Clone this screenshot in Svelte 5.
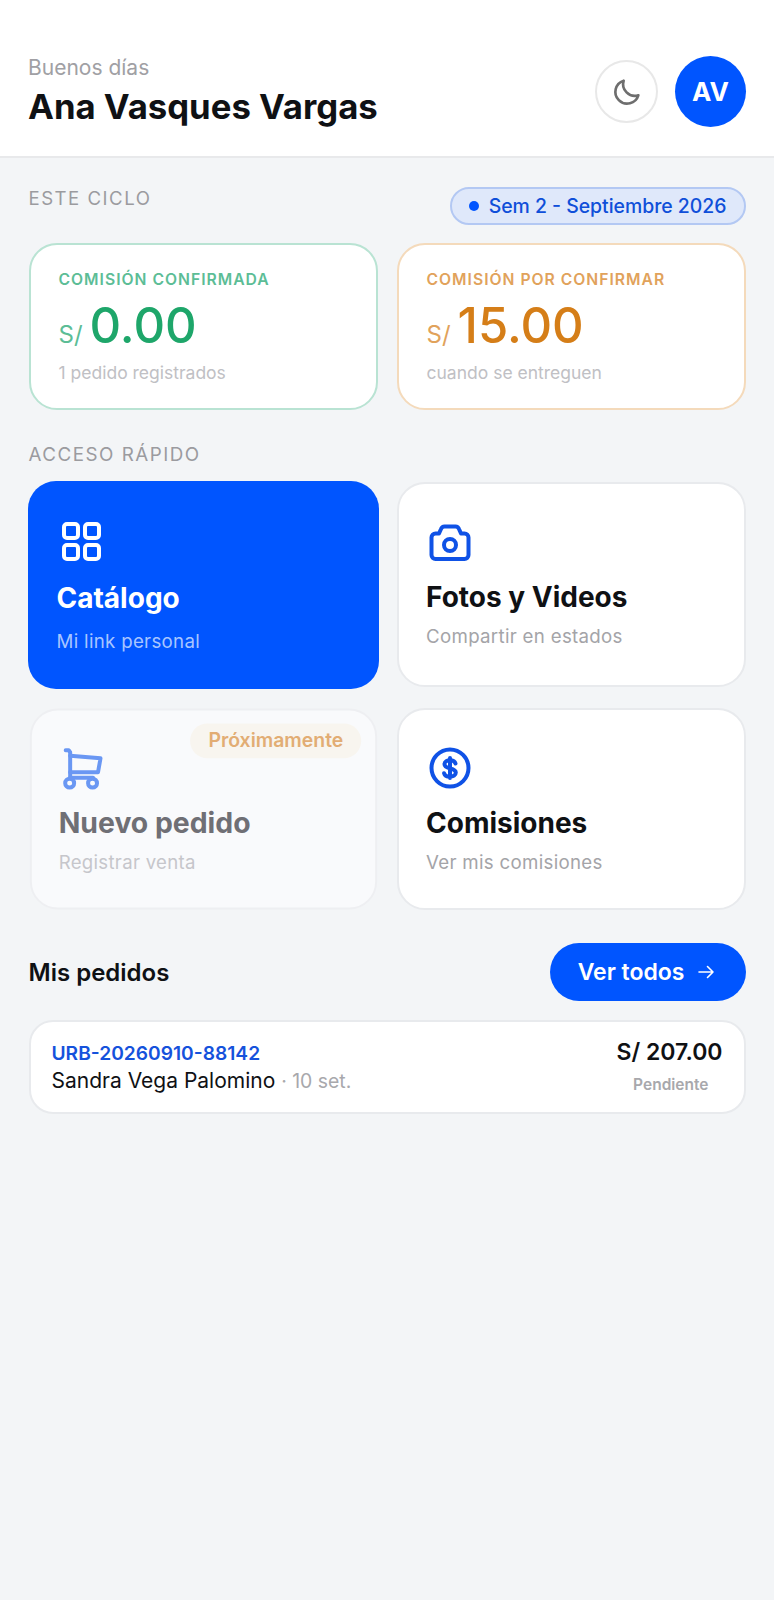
<script>
	const stats = [
		{ tone: "green", label: "Comisión confirmada", value: "0.00", note: "1 pedido registrados" },
		{ tone: "orange", label: "Comisión por confirmar", value: "15.00", note: "cuando se entreguen" },
	];
</script>

{#snippet grid_icon()}
	<svg class="icon" viewBox="0 0 48 48" fill="none" stroke="currentColor" stroke-width="4" stroke-linejoin="round">
		<rect x="7" y="7" width="14" height="14" rx="3" />
		<rect x="28" y="7" width="14" height="14" rx="3" />
		<rect x="7" y="28" width="14" height="14" rx="3" />
		<rect x="28" y="28" width="14" height="14" rx="3" />
	</svg>
{/snippet}

{#snippet camera_icon()}
	<svg class="icon" viewBox="0 0 48 48" fill="none" stroke="currentColor" stroke-width="4" stroke-linejoin="round">
		<path d="M5.500 19.500a4 4 0 0 1 4-4h3.500l2-4.500a4 4 0 0 1 3.500-2.500h11a4 4 0 0 1 3.500 2.500l2 4.500h3.500a4 4 0 0 1 4 4V37a4 4 0 0 1-4 4h-29a4 4 0 0 1-4-4Z" />
		<circle cx="24" cy="27" r="6" />
	</svg>
{/snippet}

{#snippet cart_icon()}
	<svg class="icon" viewBox="0 0 48 48" fill="none" stroke="currentColor" stroke-width="4" stroke-linecap="round" stroke-linejoin="round">
		<path d="M7 6h3l1.500 2V34" />
		<path d="M11.500 11.500 42 14l-2.500 14h-28" />
		<path d="M11.500 33.500h23" />
		<circle cx="11" cy="39" r="4.500" />
		<circle cx="34" cy="39" r="4.500" />
	</svg>
{/snippet}

{#snippet dollar_icon()}
	<svg class="icon" viewBox="0 0 48 48" fill="none" stroke="currentColor">
		<circle cx="24" cy="24" r="18.500" stroke-width="4" />
		<path d="M29.500 19.500c-.5-2-2.800-3.200-5.500-3.200s-5.500 1.300-5.500 3.900c0 5.600 11.300 2.900 11.300 8.400 0 2.600-2.600 4-5.800 4s-5.400-1.200-5.900-3.400M24 14v20" stroke-width="4" stroke-linecap="round" />
	</svg>
{/snippet}

<div class="page">
	<header class="top">
		<div class="who">
			<p class="hello">Buenos días</p>
			<h1>Ana Vasques Vargas</h1>
		</div>
		<button class="theme" aria-label="Cambiar tema">
			<svg viewBox="0 0 24 24" width="32" height="32" fill="none" stroke="currentColor" stroke-width="2" stroke-linecap="round" stroke-linejoin="round">
				<path d="M20.500 14.500A8.800 8.800 0 0 1 9.500 3.500a8.800 8.800 0 1 0 11 11Z" />
			</svg>
		</button>
		<div class="avatar">AV</div>
	</header>

	<main>
		<div class="cycle">
			<span class="section">Este ciclo</span>
			<span class="pill"><i></i>Sem 2 - Septiembre 2026</span>
		</div>

		<div class="stats">
			{#each stats as stat}
				<div class="stat {stat.tone}">
					<div class="stat-label">{stat.label}</div>
					<div class="amount"><small>S/</small><b>{stat.value}</b></div>
					<div class="stat-note">{stat.note}</div>
				</div>
			{/each}
		</div>

		<div class="section access">Acceso rápido</div>

		<div class="tiles">
			<a class="tile primary">
				{@render grid_icon()}
				<strong>Catálogo</strong>
				<span>Mi link personal</span>
			</a>
			<a class="tile">
				{@render camera_icon()}
				<strong>Fotos y Videos</strong>
				<span>Compartir en estados</span>
			</a>
			<a class="tile disabled">
				<em>Próximamente</em>
				{@render cart_icon()}
				<strong>Nuevo pedido</strong>
				<span>Registrar venta</span>
			</a>
			<a class="tile">
				{@render dollar_icon()}
				<strong>Comisiones</strong>
				<span>Ver mis comisiones</span>
			</a>
		</div>

		<div class="orders-head">
			<h2>Mis pedidos</h2>
			<button class="all">
				Ver todos
				<svg viewBox="0 0 18 18" width="18" height="18" fill="none" stroke="currentColor" stroke-width="1.600" stroke-linecap="round" stroke-linejoin="round">
					<path d="M2 9h14M10.500 3.500 16 9l-5.500 5.500" />
				</svg>
			</button>
		</div>

		<div class="order">
			<div>
				<div class="code">URB-20260910-88142</div>
				<div class="client">Sandra Vega Palomino <span>· 10 set.</span></div>
			</div>
			<div class="order-side">
				<div class="total">S/ 207.00</div>
				<div class="status">Pendiente</div>
			</div>
		</div>
	</main>
</div>

<style>
	:global(body) {
		background: #f3f5f7;
	}

	.page {
		min-height: 1600px;
		background: #f3f5f7;
		font-family: Inter, "Liberation Sans", sans-serif;
		color: #0f1114;
	}

	.top {
		display: flex;
		align-items: flex-start;
		height: 158px;
		box-sizing: border-box;
		padding: 56px 28px 0 28px;
		background: #fff;
		border-bottom: 2px solid #e8e9eb;
	}

	.who {
		flex: 1;
	}

	.hello {
		margin: 0;
		font-size: 21px;
		line-height: 24px;
		color: #a0a0a4;
	}

	h1 {
		margin: 6px 0 0;
		font-size: 34.700px;
		line-height: 40px;
		font-weight: 700;
	}

	.theme {
		width: 63px;
		height: 63px;
		margin: 4px 17px 0 0;
		padding: 0;
		display: grid;
		place-items: center;
		background: #fff;
		border: 2px solid #e8e8e8;
		border-radius: 50%;
		color: #6e6e6e;
	}

	.avatar {
		width: 71px;
		height: 71px;
		display: grid;
		place-items: center;
		border-radius: 50%;
		background: #0055ff;
		color: #fff;
		font-size: 26px;
		font-weight: 700;
	}

	main {
		padding: 29px 28.500px 0;
	}

	.cycle {
		display: flex;
		justify-content: space-between;
		align-items: flex-start;
	}

	.section {
		font-size: 18.600px;
		line-height: 22px;
		letter-spacing: 1.500px;
		text-transform: uppercase;
		color: #9b9b9f;
	}

	.pill {
		display: flex;
		align-items: center;
		gap: 10px;
		height: 38px;
		box-sizing: border-box;
		padding: 0 17px;
		border: 2px solid #b3c8f3;
		border-radius: 19px;
		background: #dfe8fa;
		color: #0f4fd9;
		font-size: 19.400px;
		font-weight: 500;
	}

	.pill i {
		width: 10px;
		height: 10px;
		border-radius: 50%;
		background: #0055ff;
	}

	.stats,
	.tiles {
		display: grid;
		grid-template-columns: 1fr 1fr;
		column-gap: 19px;
	}

	.stats {
		margin-top: 18px;
	}

	.stat {
		height: 167px;
		box-sizing: border-box;
		padding: 25px 28px 0;
		background: #fff;
		border: 2px solid;
		border-radius: 28px;
	}

	.stat.green {
		border-color: #b9e3d3;
		--light: #5cbd96;
		--dark: #1ea66a;
	}

	.stat.orange {
		border-color: #f4dabb;
		--light: #e1a25b;
		--dark: #d57e18;
	}

	.stat-label {
		font-size: 15.700px;
		line-height: 20px;
		font-weight: 600;
		letter-spacing: 1px;
		text-transform: uppercase;
		color: var(--light);
	}

	.amount {
		display: flex;
		align-items: baseline;
		gap: 7px;
		height: 62px;
		margin-top: 5px;
		line-height: 62px;
	}

	.amount small {
		font-size: 24px;
		color: var(--light);
	}

	.amount b {
		font-size: 49px;
		font-weight: 500;
		color: var(--dark);
	}

	.stat-note {
		margin-top: 4px;
		font-size: 17.500px;
		line-height: 24px;
		color: #c0c0c4;
	}

	.access {
		margin-top: 34px;
		margin-bottom: 16px;
		font-size: 18.800px;
	}

	.tiles {
		grid-template-rows: 205px 202px;
		row-gap: 21px;
	}

	.tile {
		position: relative;
		display: flex;
		flex-direction: column;
		box-sizing: border-box;
		padding: 34px 27.500px 0;
		background: #fff;
		border: 2px solid #e8eaed;
		border-radius: 28px;
	}

	.icon {
		display: block;
		width: 48px;
		height: 48px;
		color: #0f52e6;
	}

	.tile strong {
		margin-top: 14px;
		font-size: 28px;
		line-height: 34px;
		font-weight: 700;
	}

	.tile span {
		margin-top: 11px;
		font-size: 18.700px;
		line-height: 24px;
		letter-spacing: 0.300px;
		color: #a4a4a8;
	}

	.primary {
		margin: -1px -1px -2px;
		background: #0055ff;
		border: none;
		color: #fff;
		padding: 36px 29px 0;
	}

	.primary .icon {
		color: #fff;
	}

	.primary strong {
		margin-top: 16px;
	}

	.primary span {
		margin-top: 15px;
		color: #a8c5ff;
	}

	.disabled {
		transform: scale(0.995);
		padding-left: 27px;
		background: #f9fafc;
		border-color: #eeeff2;
	}

	.disabled .icon {
		color: #6a97f3;
	}

	.disabled strong {
		font-size: 28.500px;
		color: #6f6f75;
	}

	.disabled span {
		color: #c6c6cb;
	}

	.disabled em {
		position: absolute;
		top: 13px;
		right: 14px;
		padding: 0 18px;
		height: 35px;
		line-height: 35px;
		border-radius: 18px;
		background: #f8f5ef;
		color: #e2ad74;
		font-size: 19.500px;
		font-style: normal;
		font-weight: 600;
	}

	.orders-head {
		display: flex;
		justify-content: space-between;
		align-items: center;
		margin-top: 33px;
	}

	h2 {
		margin: 0;
		font-size: 24px;
		font-weight: 600;
	}

	.all {
		display: flex;
		align-items: center;
		gap: 12px;
		height: 58px;
		padding: 0 31px 0 28px;
		border: none;
		border-radius: 29px;
		background: #0055ff;
		color: #fff;
		font-family: inherit;
		font-size: 23px;
		font-weight: 600;
	}

	.order {
		display: flex;
		justify-content: space-between;
		margin-top: 19px;
		height: 94px;
		box-sizing: border-box;
		padding: 18px 21px 0;
		background: #fff;
		border: 2px solid #e8eaed;
		border-radius: 24px;
	}

	.code {
		font-size: 19.200px;
		line-height: 26px;
		font-weight: 600;
		color: #1552dc;
	}

	.client {
		margin-top: 2px;
		font-size: 21px;
		line-height: 26px;
	}

	.client span {
		font-size: 19.400px;
		color: #a8a8ac;
	}

	.order-side {
		text-align: right;
	}

	.total {
		margin-top: -2px;
		font-size: 23px;
		line-height: 28px;
		font-weight: 600;
	}

	.status {
		margin-top: 9px;
		padding-right: 14px;
		font-size: 15.500px;
		line-height: 20px;
		font-weight: 600;
		color: #a8a8ac;
	}
</style>
